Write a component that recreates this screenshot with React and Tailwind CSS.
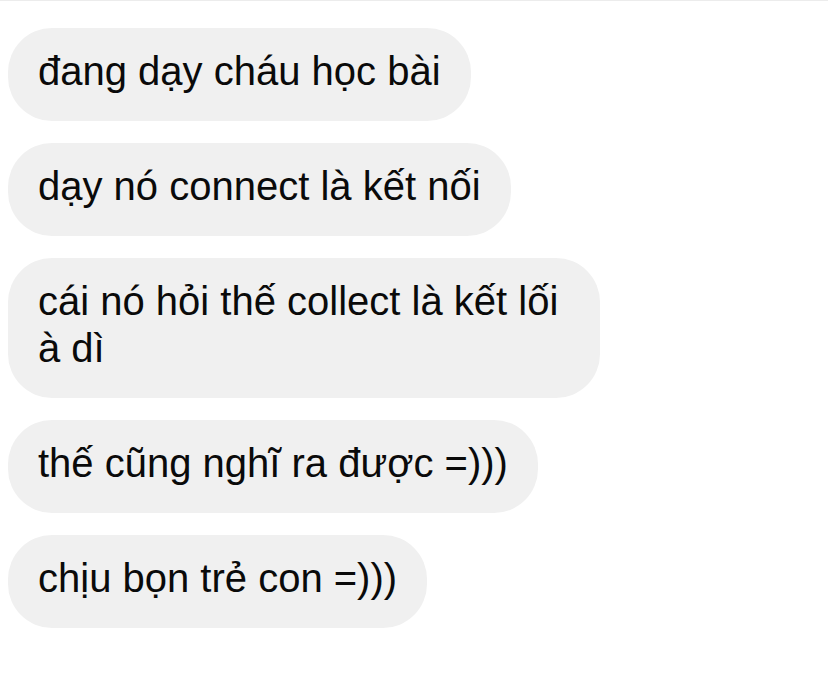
export default function App() {
  const msgs = [
    "đang dạy cháu học bài",
    "dạy nó connect là kết nối",
    "cái nó hỏi thế collect là kết lối à dì",
    "thế cũng nghĩ ra được =)))",
    "chịu bọn trẻ con =)))",
  ];
  return (
    <div className="w-[828px] h-[676px] bg-white overflow-hidden pt-[27px] pl-[8px] flex flex-col gap-[22px] items-start border-t border-[#ececec]" style={{ fontFamily: '"Liberation Sans", Arial, sans-serif' }}>
      {msgs.map((m, i) => (
        <div key={i} className="bg-[#f0f0f0] rounded-[44px] pl-[30px] pr-[30px] pt-[20px] pb-[26px] max-w-[592px] text-[40px] leading-[47px] text-[#0a0a0a]">
          {m}
        </div>
      ))}
    </div>
  );
}
